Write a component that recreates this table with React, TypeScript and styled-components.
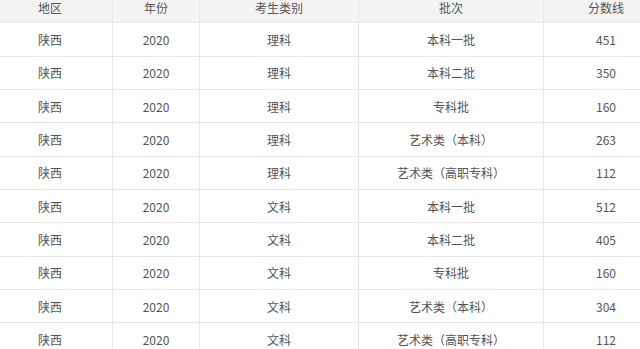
import React from "react";
import styled, { createGlobalStyle } from "styled-components";

const GlobalStyle = createGlobalStyle`
  html, body {
    margin: 0;
    padding: 0;
    background: #fff;
    overflow: hidden;
  }
`;

const headers = ["地区", "年份", "考生类别", "批次", "分数线"];

const rows: string[][] = [
  ["陕西", "2020", "理科", "本科一批", "451"],
  ["陕西", "2020", "理科", "本科二批", "350"],
  ["陕西", "2020", "理科", "专科批", "160"],
  ["陕西", "2020", "理科", "艺术类（本科）", "263"],
  ["陕西", "2020", "理科", "艺术类（高职专科）", "112"],
  ["陕西", "2020", "文科", "本科一批", "512"],
  ["陕西", "2020", "文科", "本科二批", "405"],
  ["陕西", "2020", "文科", "专科批", "160"],
  ["陕西", "2020", "文科", "艺术类（本科）", "304"],
  ["陕西", "2020", "文科", "艺术类（高职专科）", "112"],
];

export default function App() {
  return (
    <>
      <GlobalStyle />
      <Table>
        <Row $head>
          {headers.map((h) => (
            <Cell key={h} $head>
              {h}
            </Cell>
          ))}
        </Row>
        {rows.map((r, i) => (
          <Row key={i}>
            {r.map((c, j) => (
              <Cell key={j}>{c}</Cell>
            ))}
          </Row>
        ))}
      </Table>
    </>
  );
}

const Table = styled.div`
  width: 681px;
  margin-left: -12px;
  font-family: "Noto Sans CJK SC", "Microsoft YaHei", sans-serif;
  font-size: 12px;
  color: #555;
`;

const Row = styled.div<{ $head?: boolean }>`
  display: grid;
  grid-template-columns: 125px 87px 159px 185px 125px;
  height: ${(p) => (p.$head ? "23.333px" : "33.333px")};
  box-sizing: border-box;
  border-bottom: 1px solid #e8e8e8;
  background: ${(p) => (p.$head ? "#f3f3f3" : "#fff")};
`;

const Cell = styled.div<{ $head?: boolean }>`
  display: flex;
  align-items: ${(p) => (p.$head ? "flex-start" : "center")};
  justify-content: center;
  padding-top: ${(p) => (p.$head ? "1px" : "0")};
  line-height: 13px;
  border-right: 1px solid #e8e8e8;
  white-space: nowrap;
`;
